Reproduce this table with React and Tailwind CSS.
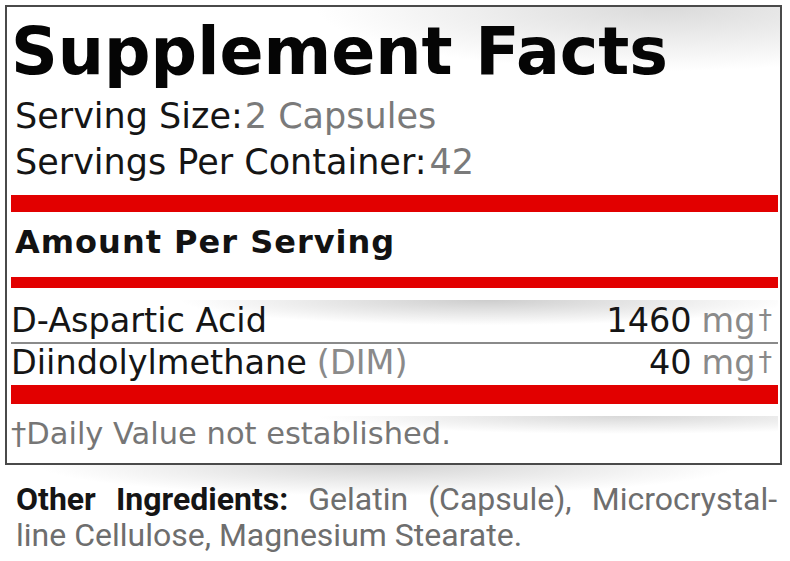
import React from "react";

const rows = [
    { name: "D-Aspartic Acid", note: "", amount: "1460" },
    { name: "Diindolylmethane", note: "(DIM)", amount: "40" },
];

const App = () => {
    return (
        <div className="w-[790px] h-[561px] bg-white overflow-hidden font-['DejaVu_Sans',sans-serif]">
            {/* Label box */}
            <div className="ml-[5px] mt-[5px] w-[777px] h-[460px] border-2 border-[#4a4a4a] pl-[4px] pr-[2px] bg-[radial-gradient(ellipse_45%_14%_at_85%_0%,#dadada,#ffffff00)]">
                <h1 className="mt-[13px] text-[65px] leading-[64px] font-bold text-[#050505] whitespace-nowrap">
                    Supplement Facts
                </h1>

                <div className="mt-[9px] pl-[4px] text-[35px] leading-[46px] text-[#151515]">
                    <div className="whitespace-nowrap">
                        Serving Size:<span className="ml-[2px] text-[#7a7a7a]">2 Capsules</span>
                    </div>
                    <div className="whitespace-nowrap">
                        Servings Per Container:<span className="ml-[3px] text-[#7a7a7a]">42</span>
                    </div>
                </div>

                <div className="mt-[10px] h-[17px] bg-[#e20000]" />

                <div className="mt-[12px] pl-[4px] text-[32px] leading-[36px] font-bold tracking-[1px] text-[#121212]">
                    Amount Per Serving
                </div>

                <div className="mt-[17px] h-[11px] bg-[#e20000]" />

                {/* Ingredient rows */}
                <div className="mt-[12px] text-[33.5px] text-[#151515]">
                    {rows.map((row, i) => (
                        <div
                            key={row.name}
                            className={
                                i === 0
                                    ? "flex justify-between items-baseline leading-[39px] pb-[2px] border-b-2 border-[#8a8a8a] bg-[radial-gradient(ellipse_40%_60%_at_62%_0%,#cdcdcd,#ffffff00)]"
                                    : "flex justify-between items-baseline leading-[35px]"
                            }
                        >
                            <span className="whitespace-nowrap">
                                {row.name}
                                {row.note && <span className="ml-[10px] text-[#8a8a8a]">{row.note}</span>}
                            </span>
                            <span className="whitespace-nowrap pr-[6px]">
                                {row.amount}
                                <span className="ml-[10px] text-[#8a8a8a]">mg</span>
                                <span className="ml-[3px] text-[27px] text-[#8a8a8a] align-[3px]">†</span>
                            </span>
                        </div>
                    ))}
                </div>

                <div className="mt-[5px] h-[19px] bg-[#e20000]" />

                <div className="mt-[12px] text-[30.5px] leading-[36px] text-[#767676] whitespace-nowrap bg-[radial-gradient(ellipse_40%_50%_at_80%_0%,#d8d8d8,#ffffff00)]">
                    †Daily Value not established.
                </div>
            </div>

            {/* Other ingredients */}
            <div className="pt-[16px] pl-[16px] w-[777px] text-[32px] leading-[36px] text-[#6e6e6e] font-['Roboto',sans-serif] bg-[radial-gradient(ellipse_45%_35%_at_50%_0%,#d4d4d4,#ffffff00)]">
                <div className="text-justify [text-align-last:justify]">
                    <span className="font-bold text-[#151515]">Other Ingredients:</span> Gelatin (Capsule), Microcrystal-
                </div>
                <div>line Cellulose, Magnesium Stearate.</div>
            </div>
        </div>
    );
};

export default App;
